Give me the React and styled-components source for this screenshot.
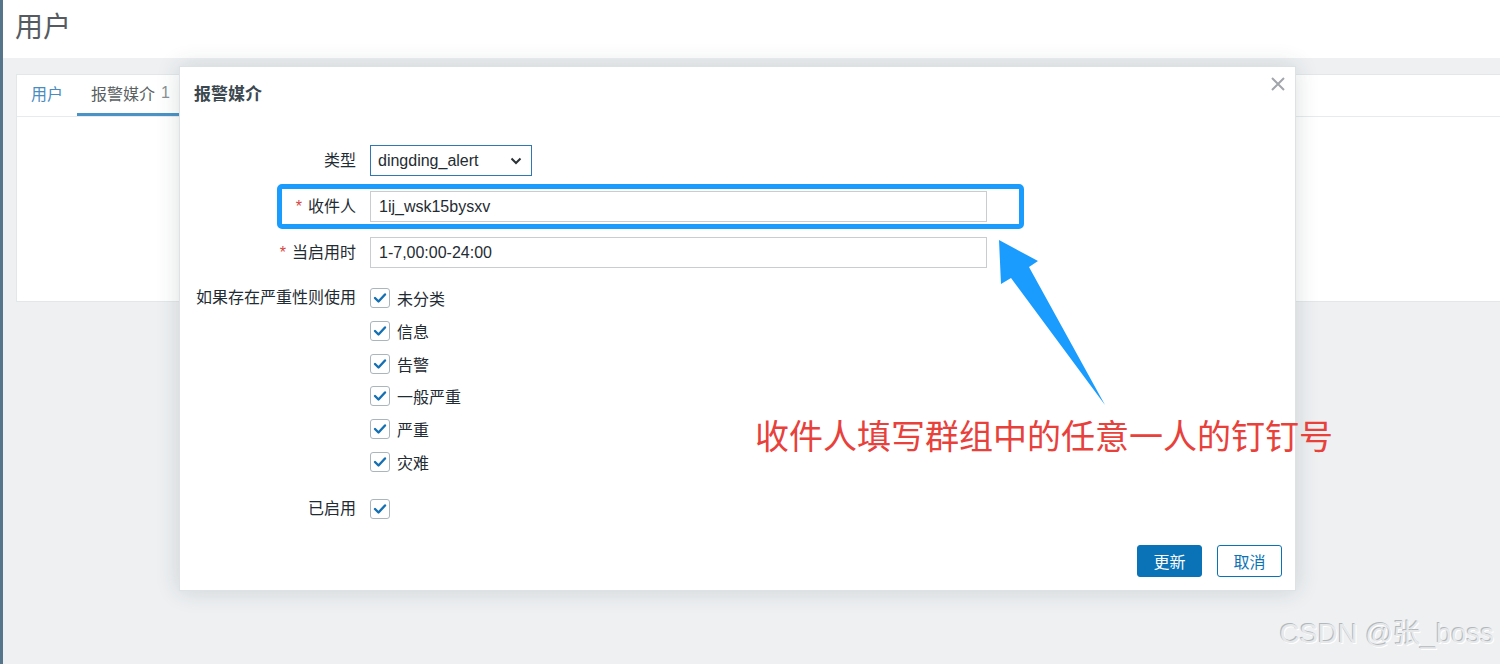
import React from "react";
import styled, { createGlobalStyle } from "styled-components";

const GlobalStyle = createGlobalStyle`
  html, body {
    margin: 0;
    padding: 0;
    background: #eef0f2;
  }
  * {
    box-sizing: border-box;
  }
`;

const CJK = `"Liberation Sans", "Noto Sans CJK SC", sans-serif`;

const Page = styled.div`
  position: relative;
  width: 1500px;
  height: 664px;
  overflow: hidden;
  background: #eef0f2;
  border-left: 3px solid #56758a;
  font-family: ${CJK};
  color: #1f2c33;
`;

const Header = styled.header`
  display: flex;
  align-items: flex-start;
  height: 58px;
  padding: 10px 0 0 12px;
  background: #ffffff;
`;

const PageTitle = styled.h1`
  margin: 0;
  font-size: 28px;
  line-height: 36px;
  font-weight: 400;
  color: #555b60;
`;

const Content = styled.main`
  padding: 16px 0 0 13px;
`;

const Card = styled.section`
  height: 228px;
  background: #ffffff;
  border: 1px solid #e3e7ea;
  border-right: none;
`;

const TabBar = styled.nav`
  display: flex;
  height: 42px;
  border-bottom: 1px solid #e8ebee;
`;

const Tab = styled.div`
  display: flex;
  align-items: center;
  padding: 0 14px 2px;
  font-size: 16px;
  color: ${({ $active }) => ($active ? "#5a5f63" : "#4a8cbf")};
  border-bottom: 3px solid ${({ $active }) => ($active ? "#4a93c7" : "transparent")};
`;

const TabCount = styled.span`
  margin-left: 6px;
  color: #8a9095;
`;

const Modal = styled.div`
  position: absolute;
  left: 176px;
  top: 66px;
  width: 1117px;
  height: 525px;
  display: flex;
  flex-direction: column;
  background: #ffffff;
  border: 1px solid #dde2e5;
  box-shadow: 0 0 22px rgba(40, 55, 65, 0.16);
`;

const ModalHeader = styled.div`
  display: flex;
  justify-content: space-between;
  align-items: flex-start;
  height: 57px;
  padding: 18px 9px 0 14px;
`;

const ModalTitle = styled.h2`
  margin: 0;
  font-size: 17px;
  line-height: 20px;
  font-weight: 700;
  color: #3b4850;
`;

const CloseButton = styled.button`
  margin-top: -9px;
  width: 16px;
  height: 16px;
  padding: 0;
  border: none;
  background: none;
  cursor: pointer;
`;

const Form = styled.div`
  display: flex;
  flex-direction: column;
`;

const FormRow = styled.div`
  display: grid;
  grid-template-columns: 176px 1fr;
  column-gap: 14px;
  align-items: start;
  margin-top: ${({ $top }) => $top}px;
`;

const Label = styled.label`
  text-align: right;
  font-size: 16px;
  line-height: ${({ $lh }) => $lh}px;
  color: #1f2c33;
  white-space: nowrap;
`;

const Required = styled.span`
  color: #d64541;
  margin-right: 6px;
`;

const SelectBox = styled.div`
  display: flex;
  align-items: center;
  justify-content: space-between;
  width: 162px;
  height: 31px;
  padding: 0 9px 0 7px;
  border: 1px solid #2f78b2;
  font-size: 16px;
  color: #1f2c33;
`;

const TextInput = styled.input`
  width: 617px;
  height: 31px;
  padding: 0 8px;
  border: 1px solid #c9cdd0;
  font-family: "Liberation Sans", sans-serif;
  font-size: 16px;
  color: #1f2c33;
  outline: none;
`;

const CheckList = styled.div`
  display: flex;
  flex-direction: column;
  gap: 12.8px;
`;

const CheckItem = styled.div`
  display: flex;
  align-items: center;
  gap: 7px;
  height: 20px;
  font-size: 16px;
  color: #1f2c33;
`;

const Box = styled.span`
  display: flex;
  align-items: center;
  justify-content: center;
  width: 20px;
  height: 20px;
  border: 1px solid #aab5bd;
  border-radius: 3px;
  background: #ffffff;
`;

const Footer = styled.div`
  display: flex;
  justify-content: flex-end;
  gap: 15px;
  margin-top: auto;
  padding: 0 13px 13px;
`;

const Button = styled.button`
  width: 65px;
  height: 32px;
  border-radius: 3px;
  border: 1px solid #0a73b7;
  background: ${({ $primary }) => ($primary ? "#0a73b7" : "#ffffff")};
  color: ${({ $primary }) => ($primary ? "#ffffff" : "#0a73b7")};
  font-family: ${CJK};
  font-size: 16px;
`;

const Highlight = styled.div`
  position: absolute;
  left: 274px;
  top: 184px;
  width: 747px;
  height: 45px;
  border: 5px solid #1a9cff;
  border-radius: 5px;
`;

const ArrowSvg = styled.svg`
  position: absolute;
  left: 990px;
  top: 235px;
`;

const Note = styled.div`
  position: absolute;
  left: 752px;
  top: 418px;
  font-family: "Noto Sans CJK SC", sans-serif;
  font-size: 34px;
  line-height: 1;
  color: #e8413b;
  white-space: nowrap;
`;

const Watermark = styled.div`
  position: absolute;
  right: 6px;
  top: 620px;
  font-family: ${CJK};
  font-size: 27.5px;
  line-height: 1;
  color: #e6e8ea;
  text-shadow: -1px -1px 0 #b3b8bc, 1px 1px 0 #ffffff;
`;

const Check = () => (
  <Box>
    <svg width="14" height="12" viewBox="0 0 14 12">
      <polyline points="2,6 5.5,9.5 12,2.5" fill="none" stroke="#1470b3" strokeWidth="2.4" strokeLinecap="round" strokeLinejoin="round" />
    </svg>
  </Box>
);

const severities = ["未分类", "信息", "告警", "一般严重", "严重", "灾难"];

export default function App() {
  return (
    <>
      <GlobalStyle />
      <Page>
        <Header>
          <PageTitle>用户</PageTitle>
        </Header>
        <Content>
          <Card>
            <TabBar>
              <Tab>用户</Tab>
              <Tab $active>
                报警媒介<TabCount>1</TabCount>
              </Tab>
            </TabBar>
          </Card>
        </Content>

        <Modal>
          <ModalHeader>
            <ModalTitle>报警媒介</ModalTitle>
            <CloseButton aria-label="关闭">
              <svg width="16" height="16" viewBox="0 0 16 16">
                <path d="M2 2L14 14M14 2L2 14" stroke="#a1a6aa" strokeWidth="2" />
              </svg>
            </CloseButton>
          </ModalHeader>

          <Form>
            <FormRow $top={21}>
              <Label $lh={31}>类型</Label>
              <SelectBox>
                <span>dingding_alert</span>
                <svg width="12" height="8" viewBox="0 0 12 8">
                  <polyline points="1.5,1.5 6,6 10.5,1.5" fill="none" stroke="#2b3236" strokeWidth="2" />
                </svg>
              </SelectBox>
            </FormRow>
            <FormRow $top={15}>
              <Label $lh={31}>
                <Required>*</Required>收件人
              </Label>
              <TextInput defaultValue="1ij_wsk15bysxv" />
            </FormRow>
            <FormRow $top={15}>
              <Label $lh={31}>
                <Required>*</Required>当启用时
              </Label>
              <TextInput defaultValue="1-7,00:00-24:00" />
            </FormRow>
            <FormRow $top={20}>
              <Label $lh={20}>如果存在严重性则使用</Label>
              <CheckList>
                {severities.map((s) => (
                  <CheckItem key={s}>
                    <Check />
                    {s}
                  </CheckItem>
                ))}
              </CheckList>
            </FormRow>
            <FormRow $top={27}>
              <Label $lh={20}>已启用</Label>
              <CheckItem>
                <Check />
              </CheckItem>
            </FormRow>
          </Form>

          <Footer>
            <Button $primary>更新</Button>
            <Button>取消</Button>
          </Footer>
        </Modal>

        <Highlight />
        <ArrowSvg width="120" height="180" viewBox="990 235 120 180">
          <polygon points="996,240 1035,261 1026,267 1102,405 1008,278 998,284" fill="#1a9cff" />
        </ArrowSvg>
        <Note>收件人填写群组中的任意一人的钉钉号</Note>
        <Watermark>CSDN @张_boss</Watermark>
      </Page>
    </>
  );
}
